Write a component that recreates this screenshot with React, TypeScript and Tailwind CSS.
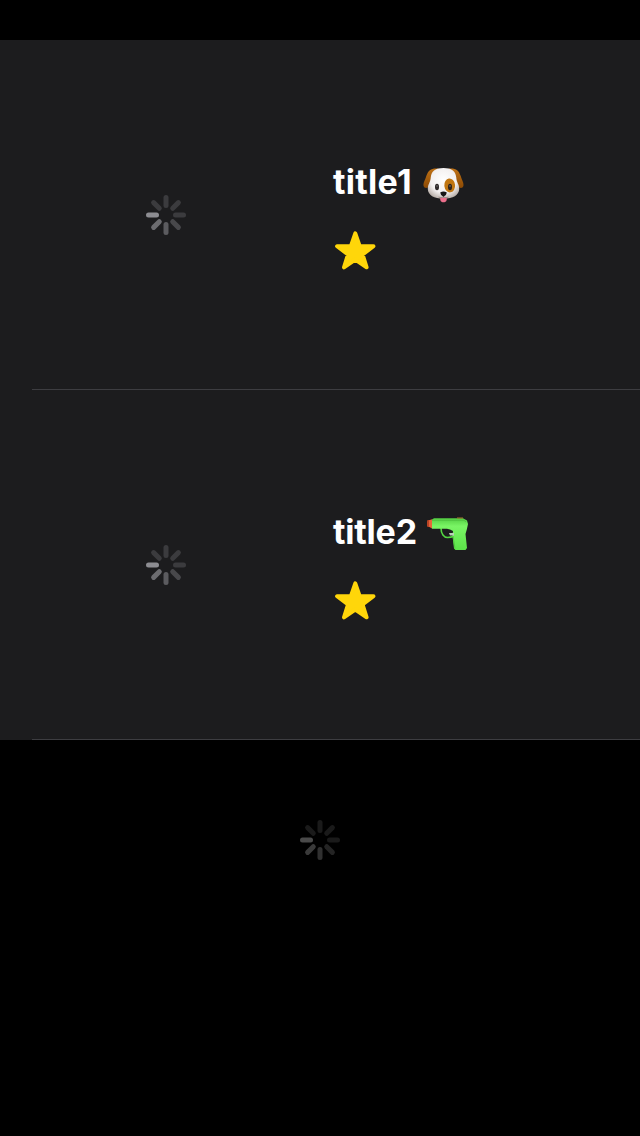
import type { ReactNode } from "react";

const BRIGHT = ["#3b3b3e", "#3b3b3e", "#3b3b3e", "#48484b", "#5b5b5f", "#6c6c70", "#8d8d92", "#3b3b3e"];
const DIM = ["#1a1a1a", "#1a1a1a", "#1a1a1a", "#242424", "#303030", "#3a3a3a", "#4a4a4a", "#1a1a1a"];

function Spinner({ colors }: { colors: string[] }) {
  return (
    <svg className="size-10" viewBox="-20 -20 40 40" role="img">
      {colors.map((color, i) => (
        <rect key={i} x="-2.5" y="-20" width="5" height="13" rx="2.5" fill={color} transform={`rotate(${i * 45})`} />
      ))}
    </svg>
  );
}

function Star() {
  return (
    <svg className="h-10 w-[42px]" viewBox="0 0 42 40">
      <path
        d="M21.300 3.300L25.600 15.900L39.500 16.200L28.600 24.500L32.600 37.300L21.300 29.600L10 37.300L14 24.500L3.100 16.200L17 15.900Z"
        fill="#ffd60a"
        stroke="#ffd60a"
        strokeWidth="4"
        strokeLinejoin="round"
      />
    </svg>
  );
}

function Dog() {
  return (
    <svg className="h-12 w-[50px]" viewBox="0 0 50 48">
      <defs>
        <radialGradient id="face" cx=".5" cy=".4" r=".62">
          <stop offset="0" stopColor="#fff" />
          <stop offset=".65" stopColor="#f3f0f0" />
          <stop offset="1" stopColor="#b9b0aa" />
        </radialGradient>
        <linearGradient id="ear" x1="0" y1="0" x2="0" y2="1">
          <stop offset="0" stopColor="#c07216" />
          <stop offset="1" stopColor="#8c4a04" />
        </linearGradient>
      </defs>
      <path d="M20 8.500C13 8 10.500 10 8.300 16C6.800 21 5 23 5.600 26C6.500 29 10 28.500 12.500 25L20 12Z" fill="url(#ear)" />
      <path d="M31 8.500C38 8 40.500 10 42.700 16C44.200 21 46 23 45.400 26C44.500 29 41 28.500 38.500 25L31 12Z" fill="url(#ear)" />
      <path d="M25.500 8C17.500 8 13.500 11 12.800 17C12.400 23 9.700 24 9.800 29C10 35 16 38.800 25.500 38.800C35 38.800 41 35 41.200 29C41.300 24 38.600 23 38.200 17C37.500 11 33.500 8 25.500 8Z" fill="url(#face)" />
      <ellipse cx="31.700" cy="25.400" rx="5.400" ry="7" fill="#c07612" transform="rotate(-6 31.700 25.400)" />
      <ellipse cx="19" cy="27" rx="2" ry="3.200" fill="#302b2c" />
      <ellipse cx="32" cy="27" rx="2" ry="3.200" fill="#2d221c" />
      <circle cx="19" cy="26" r=".8" fill="#777" />
      <circle cx="32" cy="26" r=".8" fill="#777" />
      <path d="M22.300 37.800H28.700C28.900 40 28.700 42.300 25.500 42.300C22.300 42.300 22.100 40 22.300 37.800Z" fill="#ec6f8c" />
      <path d="M25.500 35.500V37.500M20.500 37Q23 38.500 25.500 37Q28 38.500 30.500 37" fill="none" stroke="#8a7774" strokeWidth=".7" />
      <path d="M22.200 32.400Q25.500 30.800 28.800 32.400Q28.900 34.500 25.500 36.800Q22.100 34.500 22.200 32.400Z" fill="#181617" />
    </svg>
  );
}

function WaterPistol() {
  return (
    <svg className="h-[50px] w-[54px]" viewBox="0 0 54 50">
      <defs>
        <linearGradient id="barrel" x1="0" y1="0" x2="0" y2="1">
          <stop offset="0" stopColor="#54cf43" />
          <stop offset=".25" stopColor="#7af565" />
          <stop offset="1" stopColor="#5ce349" />
        </linearGradient>
      </defs>
      <path d="M21 20C21 26 24 29.500 27.500 29.500C31 29.500 32 29 34 28" fill="none" stroke="#54d642" strokeWidth="1.600" />
      <path d="M12 11.400L14 10.300H43L47 12.500L48 16L46.800 21.500L45.500 26L47 40L45.500 42H35.500L34 40.500L32.500 28L33 23L30 21.500L27 20.800H12Z" fill="url(#barrel)" />
      <path d="M12 12.300H44L46 14" stroke="#4fc23f" fill="none" strokeWidth=".9" />
      <path d="M29 25H34V27.500H30Z" fill="#b9d0b7" />
      <path d="M37 10H43" stroke="#a9772e" strokeWidth="1" />
      <path d="M33 28L35 40.500" stroke="#4bc43a" strokeWidth=".8" fill="none" />
      <rect x="7" y="12" width="3" height="7" rx="1.200" fill="#b94224" />
      <path d="M9 12.300L12 11.200V20.500L9 18.800Z" fill="#e5653b" />
    </svg>
  );
}

function Row({ title, emoji }: { title: ReactNode; emoji: ReactNode }) {
  return (
    <article className="h-[350px] bg-[#1c1c1e] pl-8">
      <div className="flex h-full border-b border-[#3d3d41]">
        <div className="flex w-[268px] items-center justify-center pt-px">
          <Spinner colors={BRIGHT} />
        </div>
        <div className="flex flex-col pt-[120px] pl-8">
          <div className="flex h-12 items-start">
            <h2 className="mt-0.5 ml-px w-[85px] text-[34px] leading-10 font-[650] whitespace-nowrap text-white">{title}</h2>
            {emoji}
          </div>
          <div className="mt-[22px] ml-[2px]">
            <Star />
          </div>
        </div>
      </div>
    </article>
  );
}

export default function App() {
  return (
    <main className="h-[1136px] w-[640px] overflow-hidden bg-black pt-10 font-['Inter',sans-serif]">
      <Row title={<span className="tracking-[0.3px]">title1</span>} emoji={<Dog />} />
      <Row title={<span className="tracking-[-0.2px]">title2</span>} emoji={<div className="-mt-0.5 ml-0.5"><WaterPistol /></div>} />
      <div className="flex justify-center pt-20">
        <Spinner colors={DIM} />
      </div>
    </main>
  );
}
